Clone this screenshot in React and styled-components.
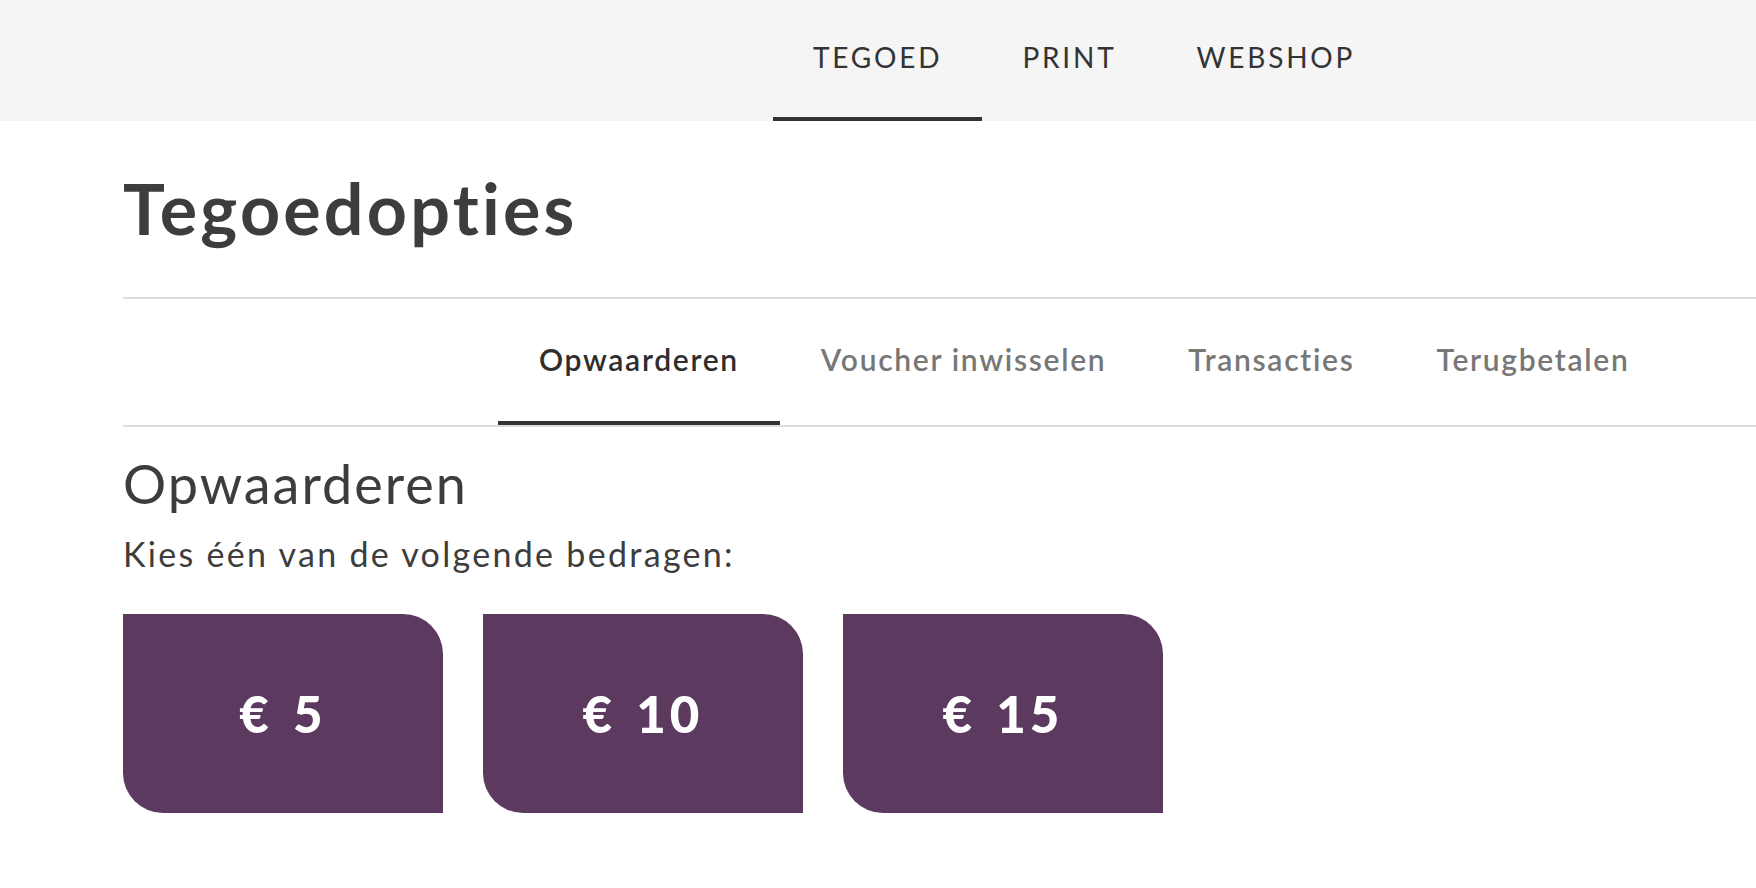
import React, { useState } from 'react';
import styled, { createGlobalStyle } from 'styled-components';

const GlobalStyle = createGlobalStyle`
  html, body {
    margin: 0;
    padding: 0;
    background: #ffffff;
    font-family: Lato, "Open Sans", Arial, sans-serif;
    font-variant-ligatures: none;
    color: #3d3d3d;
    overflow-x: hidden;
  }
`

// ----top navigation----
const TopBar = styled.header`
  display: flex;
  height: 121px;
  padding-left: 773px;
  background-color: #f4f5f4;
  box-sizing: border-box;
`
const TopLink = styled.a`
  display: flex;
  align-items: center;
  padding: 0 40px 4px;
  font-size: 28px;
  letter-spacing: 2.8px;
  color: #333333;
  text-decoration: none;
  cursor: pointer;
  border-bottom: 4px solid ${p => (p.$active ? '#333333' : 'transparent')};
`

// ----page content----
const Content = styled.main`
  padding-left: 123px;
`
const TitleBar = styled.div`
  padding: 52px 0 54px;
  border-bottom: 2px solid #dddddd;
`
const Title = styled.h1`
  margin: 0;
  font-size: 70px;
  line-height: 1;
  font-weight: 700;
  letter-spacing: 3.2px;
  color: #3d3d3d;
`
const SubTabs = styled.nav`
  display: flex;
  padding-left: 375px;
  border-bottom: 2px solid #dddddd;
`
const SubTab = styled.button`
  display: flex;
  align-items: center;
  height: 126px;
  padding: 0 41px 2px;
  border: none;
  border-bottom: 4px solid ${p => (p.$active ? '#333333' : 'transparent')};
  background: none;
  font-family: inherit;
  font-size: 30px;
  font-weight: 600;
  letter-spacing: 1.7px;
  line-height: 1;
  color: ${p => (p.$active ? '#2e2e2e' : '#777777')};
  cursor: pointer;
  box-sizing: border-box;
`
const Heading = styled.h2`
  margin: 30px 0 0;
  font-size: 54px;
  line-height: 1;
  font-weight: 400;
  letter-spacing: 2px;
  color: #3d3d3d;
`
const Hint = styled.p`
  margin: 26px 0 0;
  font-size: 34px;
  line-height: 1;
  letter-spacing: 2.3px;
  color: #3d3d3d;
`
const Amounts = styled.div`
  display: flex;
  gap: 40px;
  margin-top: 43px;
`
const AmountButton = styled.button`
  display: flex;
  align-items: center;
  justify-content: center;
  width: 320px;
  height: 199px;
  border: none;
  border-radius: 0 40px 0 40px;
  background-color: #5c3a60;
  color: #ffffff;
  font-family: inherit;
  font-size: 51px;
  font-weight: 900;
  letter-spacing: 4px;
  word-spacing: 4px;
  cursor: pointer;
`

const topLinks = ['TEGOED', 'PRINT', 'WEBSHOP'];
const subTabs = ['Opwaarderen', 'Voucher inwisselen', 'Transacties', 'Terugbetalen'];
const amounts = [5, 10, 15];

const App = () => {
  const [tab, setTab] = useState('Opwaarderen');

  return (
    <>
      <GlobalStyle />
      <TopBar>
        {topLinks.map(link => (
          <TopLink key={link} $active={link === 'TEGOED'}>{link}</TopLink>
        ))}
      </TopBar>
      <Content>
        <TitleBar>
          <Title>Tegoedopties</Title>
        </TitleBar>
        <SubTabs>
          {subTabs.map(name => (
            <SubTab key={name} $active={name === tab} onClick={() => setTab(name)}>{name}</SubTab>
          ))}
        </SubTabs>
        <Heading>Opwaarderen</Heading>
        <Hint>Kies één van de volgende bedragen:</Hint>
        <Amounts>
          {amounts.map(a => (
            <AmountButton key={a}>€ {a}</AmountButton>
          ))}
        </Amounts>
      </Content>
    </>
  )
}

export default App;
